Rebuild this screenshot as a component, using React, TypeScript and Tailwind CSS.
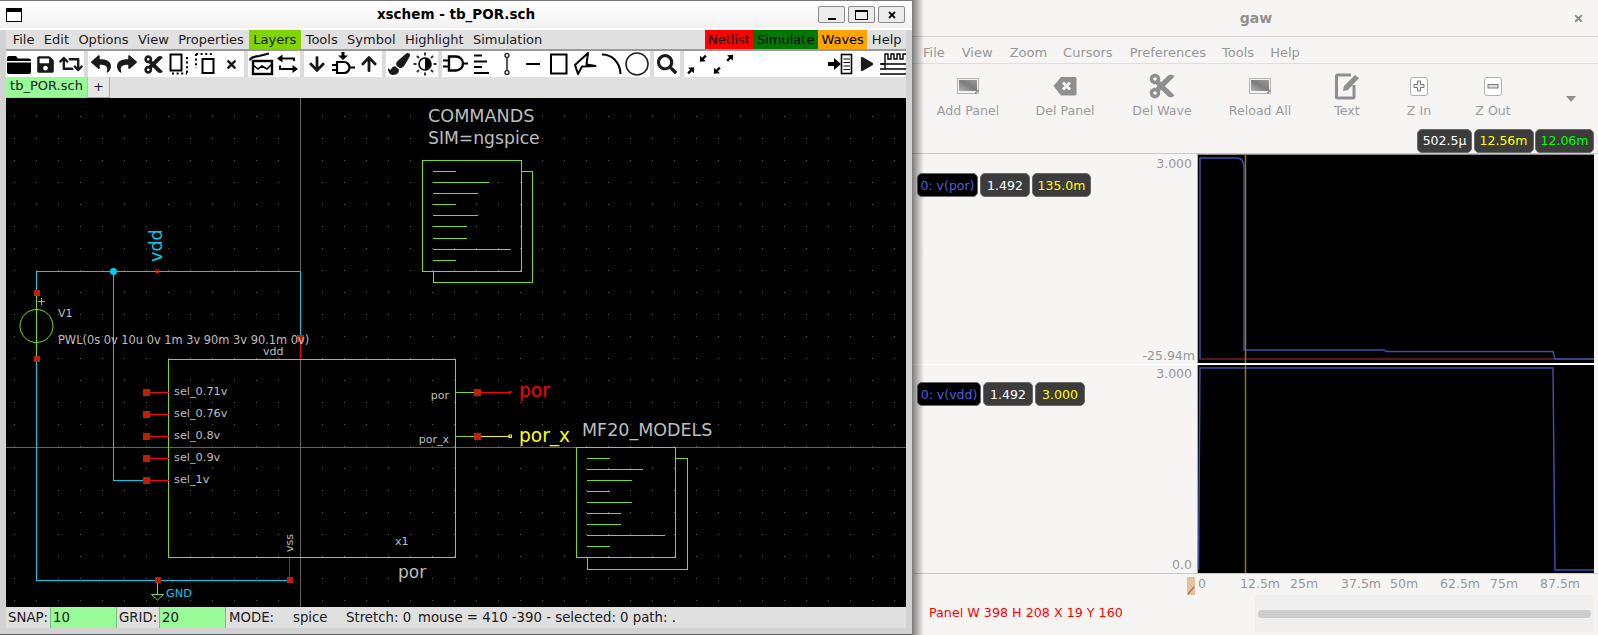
import React from 'react'
import {
  FaArrowDown,
  FaArrowUp,
  FaCut,
  FaPaintBrush,
  FaPlay,
  FaReply,
  FaRetweet,
  FaSave,
  FaSearch,
  FaShare,
  FaTimes,
} from 'react-icons/fa'

const DEJAVU = '"DejaVu Sans", sans-serif'

const CYAN = '#00ccee'
const GREEN = '#88dd00'
const RED = '#ff0000'
const PIN = '#c02000'
const TEXT = '#bebebe'

// toolbar drawings, all on a 26x26 box
const Svg: React.FC<{ children: React.ReactNode }> = ({ children }) => (
  <svg width="26" height="26" viewBox="0 0 26 26" className="block">
    {children}
  </svg>
)

const Arrow: React.FC<{ x: number; y: number; rot: number }> = ({ x, y, rot }) => (
  <g transform={`translate(${x} ${y}) rotate(${rot})`}>
    <path d="M-4 -1.2H0V-4L4.5 0L0 4V1.2H-4z" fill="#000" />
  </g>
)

const FolderIcon = () => (
  <Svg>
    <path d="M1 7a2 2 0 0 1 2-2h7l2 2.5h11a2 2 0 0 1 2 2V10H1z" fill="#000" />
    <path d="M1 11.5H25V21a2 2 0 0 1-2 2H3a2 2 0 0 1-2-2z" fill="#000" />
  </Svg>
)

const DupIcon = () => (
  <Svg>
    <rect x="4.5" y="3.5" width="11" height="16" fill="none" stroke="#000" strokeWidth="2" />
    <path d="M21 6V23M6 22.5H21" fill="none" stroke="#000" strokeWidth="2" strokeDasharray="2 2.6" />
  </Svg>
)

const MoveIcon = () => (
  <Svg>
    <path d="M4 3V17M4 3H20" fill="none" stroke="#000" strokeWidth="2" strokeDasharray="2 2.6" />
    <rect x="10.5" y="8" width="11" height="14" fill="none" stroke="#000" strokeWidth="2" />
  </Svg>
)

const WorkspaceIcon = () => (
  <Svg>
    <rect x="5" y="10" width="19" height="13" fill="none" stroke="#000" strokeWidth="2.4" />
    <path d="M2 9.5C2 6 6 6 11 5L21 2.5" fill="none" stroke="#000" strokeWidth="2.2" />
    <path d="M5 14L10 18L14 15L19 18L24 13" fill="none" stroke="#000" strokeWidth="1.6" />
  </Svg>
)

const SwapIcon = () => (
  <Svg>
    <path d="M8 7.5H20V10" fill="none" stroke="#000" strokeWidth="2" />
    <path d="M3 7.5L8.5 3.5V11.5z" fill="#000" />
    <path d="M6 14.5V18H19" fill="none" stroke="#000" strokeWidth="2" />
    <path d="M24 18L18.5 14V22z" fill="#000" />
  </Svg>
)

const GateArrowIcon = () => (
  <Svg>
    <path d="M11.5 1H14.5V4.5H18L13 9L8 4.5H11.5z" fill="#000" />
    <path d="M7 11H14a5.5 5.5 0 0 1 0 11H7z" fill="none" stroke="#000" strokeWidth="2.2" />
    <path d="M2 14H7M2 19H7M19.5 16.5H25" fill="none" stroke="#000" strokeWidth="2" />
  </Svg>
)

const SunIcon = () => (
  <Svg>
    <circle cx="13" cy="13" r="6" fill="none" stroke="#000" strokeWidth="1.6" />
    <path d="M13 7a6 6 0 0 1 0 12z" fill="#000" />
    <path
      d="M13 1.5V4.5M13 21.5V24.5M1.5 13H4.5M21.5 13H24.5M4.9 4.9L7 7M19 19L21.1 21.1M4.9 21.1L7 19M19 7L21.1 4.9"
      stroke="#333"
      strokeWidth="2"
    />
  </Svg>
)

const GateIcon = () => (
  <Svg>
    <path d="M7 5.5H14a7 7 0 0 1 0 14H7z" fill="none" stroke="#000" strokeWidth="2.4" />
    <path d="M1 9.5H7M1 15.5H7M21 12.5H26" fill="none" stroke="#000" strokeWidth="2.2" />
  </Svg>
)

const LinesIcon = () => (
  <Svg>
    <path d="M6 4.5H14M6 10.5H19M6 16H14M6 22H21" stroke="#000" strokeWidth="2" />
  </Svg>
)

const WireIcon = () => (
  <Svg>
    <path d="M13 6V20" stroke="#333" strokeWidth="1.6" />
    <circle cx="13" cy="4.5" r="2" fill="none" stroke="#333" strokeWidth="1.5" />
    <circle cx="13" cy="21.5" r="2" fill="none" stroke="#333" strokeWidth="1.5" />
  </Svg>
)

const LineIcon = () => (
  <Svg>
    <path d="M6 13H20" stroke="#000" strokeWidth="2" />
  </Svg>
)

const RectIcon = () => (
  <Svg>
    <rect x="5" y="3.5" width="15.5" height="19" fill="none" stroke="#000" strokeWidth="2" />
  </Svg>
)

const PolyIcon = () => (
  <Svg>
    <path d="M3 14L16 2L14.5 13.5L23.5 15L10 15.5L6 23z" fill="none" stroke="#000" strokeWidth="2" strokeLinejoin="round" />
  </Svg>
)

const ArcIcon = () => (
  <Svg>
    <path d="M4 3.5C14 3.5 22 11 22.5 23" fill="none" stroke="#000" strokeWidth="2" />
  </Svg>
)

const CircleIcon = () => (
  <Svg>
    <circle cx="13" cy="13" r="11" fill="none" stroke="#222" strokeWidth="1.6" />
  </Svg>
)

const CompressIcon = () => (
  <Svg>
    <Arrow x={19} y={7.5} rot={135} />
    <Arrow x={7} y={19.5} rot={-45} />
  </Svg>
)

const ExpandIcon = () => (
  <Svg>
    <Arrow x={20} y={7} rot={-45} />
    <Arrow x={7} y={19.5} rot={135} />
  </Svg>
)

const InsertIcon = () => (
  <Svg>
    <path d="M0 11H6V7L13 13L6 19V15H0z" fill="#000" />
    <rect x="13.5" y="3.5" width="10" height="19" fill="none" stroke="#000" strokeWidth="1.6" />
    <path d="M15.5 8H22M15.5 11.5H22M15.5 15H22M15.5 18.5H22" stroke="#000" strokeWidth="1.2" />
  </Svg>
)

const WavesIcon = () => (
  <Svg>
    <path d="M1 13H5V3H8V8H11V3H14V8H17V3H20V8H23V3H26" fill="none" stroke="#000" strokeWidth="1.4" />
    <path d="M0 13H26M0 18H5V14M0 23H26M5 18H26" fill="none" stroke="#000" strokeWidth="1.4" />
  </Svg>
)

const Tool: React.FC<{ children: React.ReactNode }> = ({ children }) => (
  <div className="flex h-[26px] w-[26px] shrink-0 items-center justify-center">{children}</div>
)

const Sep = () => <div className="h-[26px] w-[4px] shrink-0 bg-[#dcdcdc]" />

const XschemToolbar = () => (
  <div className="flex h-[26px] items-center bg-white">
    <Tool><FolderIcon /></Tool>
    <Tool><FaSave size={19} /></Tool>
    <Tool><FaRetweet size={24} /></Tool>
    <Sep />
    <Tool><FaReply size={20} /></Tool>
    <Tool><FaShare size={20} /></Tool>
    <Tool><FaCut size={21} /></Tool>
    <Tool><DupIcon /></Tool>
    <Tool><MoveIcon /></Tool>
    <Tool><FaTimes size={13} /></Tool>
    <Sep />
    <Tool><WorkspaceIcon /></Tool>
    <Tool><SwapIcon /></Tool>
    <Sep />
    <Tool><FaArrowDown size={18} /></Tool>
    <Tool><GateArrowIcon /></Tool>
    <Tool><FaArrowUp size={18} /></Tool>
    <Sep />
    <Tool><FaPaintBrush size={22} /></Tool>
    <Tool><SunIcon /></Tool>
    <Sep />
    <Tool><GateIcon /></Tool>
    <Tool><LinesIcon /></Tool>
    <Tool><WireIcon /></Tool>
    <Tool><LineIcon /></Tool>
    <Tool><RectIcon /></Tool>
    <Tool><PolyIcon /></Tool>
    <Tool><ArcIcon /></Tool>
    <Tool><CircleIcon /></Tool>
    <Sep />
    <Tool><FaSearch size={20} /></Tool>
    <Sep />
    <Tool><CompressIcon /></Tool>
    <Tool><ExpandIcon /></Tool>
    <div className="ml-auto flex">
      <Tool><InsertIcon /></Tool>
      <Tool><FaPlay size={14} /></Tool>
      <Tool><WavesIcon /></Tool>
    </div>
  </div>
)

const MenuItem: React.FC<{ label: string; className?: string }> = ({ label, className }) => (
  <div className={`flex h-full items-center ${className ?? 'px-[4.7px]'}`}>{label}</div>
)

const DocSymbol: React.FC<{
  x: number
  y: number
  w: number
  h: number
  bx: number
  by: number
  bw: number
  bh: number
  lx: number
  lines: [number, number][]
}> = ({ x, y, w, h, bx, by, bw, bh, lx, lines }) => (
  <g stroke={GREEN} fill="none" shapeRendering="crispEdges">
    <path d={`M${x + w} ${by + 0.5}H${bx + bw + 0.5}V${by + bh + 0.5}H${bx + 0.5}V${y + h}`} />
    <rect x={x + 0.5} y={y + 0.5} width={w} height={h} />
    {lines.map(([ly, end]) => (
      <path key={ly} d={`M${lx} ${ly + 0.5}H${end}`} />
    ))}
  </g>
)

const SEL_PINS: [string, number][] = [
  ['sel_0.71v', 392],
  ['sel_0.76v', 414],
  ['sel_0.8v', 436],
  ['sel_0.9v', 458],
  ['sel_1v', 480],
]

const Square: React.FC<{ cx: number; cy: number; s?: number }> = ({ cx, cy, s = 7 }) => (
  <rect x={cx - s / 2} y={cy - s / 2} width={s} height={s} fill={PIN} shapeRendering="crispEdges" />
)

const Schematic = () => (
  <svg
    viewBox="6 98 900 509"
    className="block h-[509px] w-[900px] bg-black"
    style={{ fontFamily: '"DejaVu Sans", sans-serif' }}
  >
    <defs>
      <pattern id="grid" x="14" y="6" width="22" height="22" patternUnits="userSpaceOnUse">
        <rect width="1" height="1" fill="#5c5c5c" />
      </pattern>
    </defs>
    <rect x="6" y="98" width="900" height="509" fill="url(#grid)" />

    {/* crosshair */}
    <path d="M300.5 98V607M6 447.5H906" stroke="#636363" shapeRendering="crispEdges" />

    {/* nets */}
    <g fill="none" shapeRendering="crispEdges">
      <path d="M36.5 293V271.5H300.5V338M36.5 359V580.5H290M113.5 271.5V480.5H147" stroke={CYAN} />
      <path d="M300.5 338V360" stroke={RED} />
      <path d="M289.5 558V580" stroke="#d01010" />
      <path d="M36.5 296V356" stroke={GREEN} />
      <path d="M38 301.5H45M41.5 298V305" stroke={GREEN} />
      <rect x="168.500" y="359.5" width="286.500" height="198" stroke={GREEN} />
      <path d="M455 392.5H477M455 436.5H477" stroke={GREEN} />
      <path d="M477 392.5H510" stroke={RED} />
      <path d="M477 436.5H510" stroke="#ffff00" />
      <path d="M157.5 582V594" stroke={GREEN} />
    </g>
    <circle cx="36.5" cy="326" r="16.5" fill="none" stroke={GREEN} />
    <circle cx="113.5" cy="271.5" r="3.5" fill={CYAN} />
    <path d="M151.5 594.5H163.5L157.5 600z" fill="none" stroke={GREEN} />

    {SEL_PINS.map(([label, y]) => (
      <g key={label}>
        <path d={`M147 ${y + 0.5}H169`} stroke={RED} shapeRendering="crispEdges" />
        <Square cx={146.5} cy={y + 0.5} />
        <text x="174" y={y + 3} fontSize="11.3" fill={TEXT}>
          {label}
        </text>
      </g>
    ))}

    <Square cx={36.5} cy={293} s={6} />
    <Square cx={36.5} cy={359} s={6} />
    <Square cx={300.5} cy={338} s={7} />
    <Square cx={290} cy={580} s={6} />
    <Square cx={157.5} cy={580} s={6} />
    <Square cx={477.5} cy={392.5} />
    <Square cx={477.5} cy={436.5} />
    <rect x="156" y="270" width="2.5" height="2.5" fill="none" stroke={PIN} />
    <rect x="509" y="391" width="2.5" height="2.5" fill={RED} />
    <rect x="509" y="435" width="2.5" height="2.5" fill="none" stroke="#ffff00" />

    <g fill={TEXT} fontSize="11">
      <text x="58" y="317">V1</text>
      <text x="58" y="344" fontSize="11.4">PWL(0s 0v 10u 0v 1m 3v 90m 3v 90.1m 0v)</text>
      <text x="263" y="355">vdd</text>
      <text x="449" y="399" textAnchor="end">por</text>
      <text x="449" y="443" textAnchor="end">por_x</text>
      <text x="395" y="545">x1</text>
      <text transform="translate(293 552) rotate(-90)">vss</text>
    </g>
    <text x="398" y="578" fontSize="17" fill={TEXT}>por</text>
    <text x="428" y="122" fontSize="17.6" fill={TEXT}>COMMANDS</text>
    <text x="428" y="144" fontSize="17.2" fill={TEXT}>SIM=ngspice</text>
    <text x="582" y="436" fontSize="17.5" fill={TEXT}>MF20_MODELS</text>
    <text x="519" y="397" fontSize="18.6" fill={RED}>por</text>
    <text x="519" y="442" fontSize="18.6" fill="#ffff00">por_x</text>
    <text transform="translate(162 262) rotate(-90)" fontSize="17.6" fill={CYAN}>vdd</text>
    <text x="166" y="597" fontSize="11.3" fill={CYAN}>GND</text>

    <DocSymbol
      x={422}
      y={160}
      w={99}
      h={111}
      bx={433}
      by={171}
      bw={99}
      bh={111}
      lx={433}
      lines={[
        [171, 456],
        [182, 489],
        [193, 478],
        [204, 456],
        [215, 478],
        [226, 467],
        [238, 467],
        [249, 511],
        [260, 456],
      ]}
    />
    <DocSymbol
      x={576}
      y={447}
      w={99}
      h={110}
      bx={587}
      by={458}
      bw={100}
      bh={111}
      lx={587}
      lines={[
        [458, 610],
        [469, 643],
        [480, 632],
        [491, 610],
        [502, 632],
        [513, 621],
        [524, 621],
        [535, 665],
        [546, 610],
      ]}
    />
  </svg>
)

const WinButton: React.FC<{ children: React.ReactNode }> = ({ children }) => (
  <div className="flex h-[17px] w-[27px] items-center justify-center rounded-[2px] border border-[#8a8a8a] bg-[#ececec]">
    {children}
  </div>
)

const StatusField: React.FC<{ value: string; width: string }> = ({ value, width }) => (
  <div className={`flex h-[21px] items-center border-x border-[#6fc46f] bg-[#98fb98] pl-[2px] ${width}`}>{value}</div>
)

const XschemWindow = () => (
  <div className="flex h-[635px] w-[912px] shrink-0 flex-col border-t border-[#777] bg-[#d2d2d2]">
    <div className="flex h-[27px] items-center bg-gradient-to-b from-white to-[#f2f2f2] pl-[6px] pr-[7px]">
      <div className="h-[14px] w-[16px] border border-black border-t-[4px] bg-white" />
      <div className="flex-1 pl-[72px] text-center text-[13.5px] font-bold text-black">xschem - tb_POR.sch</div>
      <div className="flex gap-[3px]">
        <WinButton>
          <div className="mt-[8px] h-[2px] w-[8px] bg-black" />
        </WinButton>
        <WinButton>
          <div className="h-[10px] w-[13px] border border-black border-t-[2px]" />
        </WinButton>
        <WinButton>
          <FaTimes size={10} />
        </WinButton>
      </div>
    </div>
    <div className="h-[2px] bg-white" />
    <div className="flex flex-1 flex-col pl-[6px] pr-[6px] text-[13px] text-[#1a1a1a]">
      <div className="flex h-[19px] items-center bg-[#e0e0e0] pl-[2px]">
        <MenuItem label="File" />
        <MenuItem label="Edit" />
        <MenuItem label="Options" />
        <MenuItem label="View" />
        <MenuItem label="Properties" />
        <MenuItem label="Layers" className="bg-[#80d400] px-[4.7px]" />
        <MenuItem label="Tools" />
        <MenuItem label="Symbol" />
        <MenuItem label="Highlight" />
        <MenuItem label="Simulation" />
        <div className="ml-auto flex h-full items-center text-black">
          <MenuItem label="Netlist" className="bg-[#ff0000] px-[3.5px]" />
          <MenuItem label="Simulate" className="bg-[#007800] px-[3.5px]" />
          <MenuItem label="Waves" className="bg-[#ffa500] px-[3.5px]" />
          <MenuItem label="Help" className="px-[4.5px] text-[#1a1a1a]" />
        </div>
      </div>
      <div className="h-[2px] bg-[#9a9a9a]" />
      <XschemToolbar />
      <div className="flex h-[21px] bg-[#e0e0e0]">
        <div className="flex w-[82px] items-center justify-center border-b border-r border-[#8fdc8f] bg-[#98fb98] pb-[2px] text-[13px]">
          tb_POR.sch
        </div>
        <div className="flex w-[22px] items-center justify-center border-b border-r border-[#a8a8a8] bg-[#e6e6e6]">+</div>
      </div>
      <Schematic />
      <div className="flex h-[21px] items-center whitespace-pre bg-[#e0e0e0] pl-[2px] text-[13.3px]">
        <span className="w-[42px]">SNAP:</span>
        <StatusField value="10" width="w-[67px]" />
        <span className="ml-[2px] w-[40px]">GRID:</span>
        <StatusField value="20" width="w-[67px]" />
        <span className="ml-[3px] w-[64px]">MODE:</span>
        <span className="w-[53px]">spice</span>
        <span className="w-[72px]">Stretch: 0</span>
        <span>mouse = 410 -390 - selected: 0 path: .</span>
      </div>
      <div className="flex-1" />
    </div>
    <div className="h-[1px] bg-[#666]" />
  </div>
)

const PictureIcon = () => (
  <svg width="24" height="22" viewBox="0 0 24 22" className="block">
    <defs>
      <linearGradient id="pic" x1="0" y1="1" x2="1" y2="0">
        <stop offset="0" stopColor="#b5b5b5" />
        <stop offset="0.5" stopColor="#7d7d7d" />
        <stop offset="1" stopColor="#9b9b9b" />
      </linearGradient>
    </defs>
    <rect x="1.5" y="3.5" width="21" height="15" fill="#f2f2f2" stroke="#b4b4b4" />
    <rect x="3" y="5" width="18" height="11" fill="url(#pic)" />
    <path d="M19 18.5L22.5 15" stroke="#8a8a8a" strokeWidth="1.5" />
  </svg>
)

const BackspaceIcon = () => (
  <svg width="24" height="22" viewBox="0 0 24 22" className="block">
    <path d="M8 2H22a1.500 1.500 0 0 1 1.500 1.500V19A1.500 1.500 0 0 1 22 20.500H8L0.500 11z" fill="#8f8f8f" />
    <path d="M10 7.500L17 14.500M17 7.500L10 14.500" stroke="#f6f5f4" strokeWidth="3" />
  </svg>
)

const TextIcon = () => (
  <svg width="26" height="28" viewBox="0 0 26 28" className="block">
    <path d="M17 3H3.500a1 1 0 0 0-1 1V25a1 1 0 0 0 1 1H19a1 1 0 0 0 1-1V13" fill="none" stroke="#8f8f8f" strokeWidth="3" />
    <path d="M9 19L10 14L21 3L25 6L14 18z" fill="#8f8f8f" />
  </svg>
)

const ZoomKey: React.FC<{ plus?: boolean }> = ({ plus }) => (
  <div className="flex h-[19px] w-[18px] items-center justify-center rounded-[3px] border border-[#b0b0b0] bg-white">
    {plus ? (
      <svg width="12" height="12" viewBox="0 0 12 12" className="block">
        <path d="M4.500 1H7.500V4.500H11V7.500H7.500V11H4.500V7.500H1V4.500H4.500z" fill="#eee" stroke="#777" />
      </svg>
    ) : (
      <svg width="12" height="12" viewBox="0 0 12 12" className="block">
        <rect x="1" y="4.500" width="10" height="3.500" fill="#ddd" stroke="#777" />
      </svg>
    )}
  </div>
)

const GawTool: React.FC<{ label: string; width: string; children: React.ReactNode }> = ({ label, width, children }) => (
  <div className={`flex shrink-0 flex-col items-center ${width}`}>
    <div className="flex h-[32px] items-center">{children}</div>
    <div className="mt-[1px] text-[12.6px] leading-[15px] text-[#9c9c9c]">{label}</div>
  </div>
)

const Chip: React.FC<{ children: React.ReactNode; className: string }> = ({ children, className }) => (
  <div className={`flex h-[24px] items-center justify-center rounded-[5px] border border-[#6a6a6a] text-[12.5px] ${className}`}>
    {children}
  </div>
)

const WAVE = '#3d4ea8'

const Plot: React.FC<{ viewBox: string; h: string; children: React.ReactNode }> = ({ viewBox, h, children }) => (
  <div className={`w-[397px] shrink-0 bg-black ${h}`}>
    <svg viewBox={viewBox} className="block h-full w-full" fill="none" strokeWidth="1.500">
      {children}
    </svg>
  </div>
)

const GawWindow = () => (
  <div className="relative flex h-[635px] flex-1 flex-col bg-[#f6f5f4] text-[13px] text-[#979797]">
    <div className="pointer-events-none absolute inset-y-0 left-0 z-10 w-[12px] bg-gradient-to-r from-black/50 to-transparent" />
    <div className="flex h-[37px] shrink-0 items-center justify-center border-b border-[#d6d2cd] pl-[2px] text-[14px] font-bold text-[#909090]">
      gaw
      <FaTimes size={11} className="absolute right-[14px] top-[13px]" color="#8c8c8c" />
    </div>
    <div className="flex h-[27px] shrink-0 items-center gap-[16px] border-b border-[#e0dedb] pl-[11px] pt-[5px]">
      <span className="mr-[1px]">File</span>
      <span className="mr-[1px]">View</span>
      <span>Zoom</span>
      <span className="mr-[1px]">Cursors</span>
      <span>Preferences</span>
      <span>Tools</span>
      <span>Help</span>
    </div>
    <div className="flex h-[65px] shrink-0 pl-[8px] pt-[6px]">
      <GawTool label="Add Panel" width="w-[96px]"><PictureIcon /></GawTool>
      <GawTool label="Del Panel" width="w-[98px]"><BackspaceIcon /></GawTool>
      <GawTool label="Del Wave" width="w-[96px]"><FaCut size={28} color="#8f8f8f" /></GawTool>
      <GawTool label="Reload All" width="w-[100px]"><PictureIcon /></GawTool>
      <GawTool label="Text" width="w-[74px]"><TextIcon /></GawTool>
      <GawTool label="Z In" width="w-[70px]"><ZoomKey plus /></GawTool>
      <GawTool label="Z Out" width="w-[78px]"><ZoomKey /></GawTool>
      <div className="ml-[34px] mt-[26px] h-0 w-0 border-x-[5px] border-t-[6px] border-x-transparent border-t-[#8f8f8f]" />
    </div>
    <div className="flex h-[24px] shrink-0 justify-end gap-[1.500px] pr-[4px]">
      <Chip className="w-[55px] bg-[#3c3c3c] text-white">502.5µ</Chip>
      <Chip className="w-[60px] bg-[#3c3c3c] text-[#ffff00]">12.56m</Chip>
      <Chip className="w-[59px] bg-[#3c3c3c] text-[#00ff00]">12.06m</Chip>
    </div>
    <div className="h-[1px] shrink-0 bg-[#c9c9c9]" />

    {/* upper panel */}
    <div className="flex h-[210px] shrink-0 pl-[2px]">
      <div className="flex w-[283px] shrink-0 flex-col items-end pr-[5px] pt-[2px] text-[12.5px] leading-[15px]">
        <span>3.000</span>
        <div className="ml-[3px] mt-[2px] flex gap-[2px] self-start">
          <Chip className="w-[61px] bg-black text-[#4a62d8]">0: v(por)</Chip>
          <Chip className="w-[50px] bg-[#3c3c3c] text-white">1.492</Chip>
          <Chip className="w-[59px] bg-[#3c3c3c] text-[#ffff00]">135.0m</Chip>
        </div>
        <span className="-mr-[3px] mb-[1px] mt-auto">-25.94m</span>
      </div>
      <Plot viewBox="1197 155 397 209" h="h-[209px]">
        <path d="M1197 155H1594" stroke="#8a8a8a" strokeWidth="2" />
        <path d="M1197 155V364" stroke="#a8a8a8" strokeWidth="2" />
        <path d="M1199 360H1594" stroke="#4a1c1c" strokeWidth="2" />
        <path
          d="M1200 360V159H1236C1241 159 1244 162 1244 168V351H1384L1386 352.500H1553L1555 360H1594"
          stroke={WAVE}
        />
        <path d="M1245.500 155V364" stroke="#8a8000" strokeWidth="1.500" />
      </Plot>
    </div>
    <div className="h-[1px] shrink-0 bg-white" />

    {/* lower panel */}
    <div className="flex h-[208px] shrink-0 pl-[2px]">
      <div className="flex w-[283px] shrink-0 flex-col items-end pr-[5px] pt-[1px] text-[12.5px] leading-[15px]">
        <span>3.000</span>
        <div className="ml-[3px] mt-[1px] flex gap-[2px] self-start">
          <Chip className="w-[64px] bg-black text-[#4a62d8]">0: v(vdd)</Chip>
          <Chip className="w-[50px] bg-[#3c3c3c] text-white">1.492</Chip>
          <Chip className="w-[50px] bg-[#3c3c3c] text-[#ffff00]">3.000</Chip>
        </div>
        <span className="mb-[1px] mt-auto">0.0</span>
      </div>
      <Plot viewBox="1197 365 397 208" h="h-[208px]">
        <path d="M1197 365V573" stroke="#a8a8a8" strokeWidth="2" />
        <path d="M1198.500 570L1200 368H1553L1555 570H1594" stroke={WAVE} />
        <path d="M1245.500 365V573" stroke="#8a8000" strokeWidth="1.500" />
      </Plot>
    </div>
    <div className="ml-[2px] h-[1px] shrink-0 bg-[#c9c9c9]" />

    {/* x axis */}
    <div className="flex h-[21px] shrink-0 items-center text-[12.5px]">
      <div className="ml-[275px] mt-[2px] h-[18px] w-[8px] bg-[#e3c19f]">
        <svg width="8" height="18" viewBox="0 0 8 18" className="block">
          <path d="M1 17L7 10" stroke="#9a7a5a" strokeWidth="1.200" />
        </svg>
      </div>
      <div className="flex pl-[3px]">
        <span className="w-[42px]">0</span>
        <span className="w-[50px]">12.5m</span>
        <span className="w-[51px]">25m</span>
        <span className="w-[49px]">37.5m</span>
        <span className="w-[50px]">50m</span>
        <span className="w-[50px]">62.5m</span>
        <span className="w-[50px]">75m</span>
        <span>87.5m</span>
      </div>
    </div>

    <div className="flex flex-1 items-center">
      <span className="ml-[17px] w-[326px] shrink-0 pb-[4px] text-[12.7px] text-[#ff0000]">Panel W 398 H 208 X 19 Y 160</span>
      <div className="mb-[3px] flex h-[37px] w-[339px] items-center bg-[#efefef] px-[3px]">
        <div className="h-[8px] w-full rounded-full bg-[#cdcdcd]" />
      </div>
    </div>
  </div>
)

export default function App() {
  return (
    <div className="flex h-[635px] w-[1598px] overflow-hidden" style={{ fontFamily: DEJAVU }}>
      <XschemWindow />
      <GawWindow />
    </div>
  )
}
